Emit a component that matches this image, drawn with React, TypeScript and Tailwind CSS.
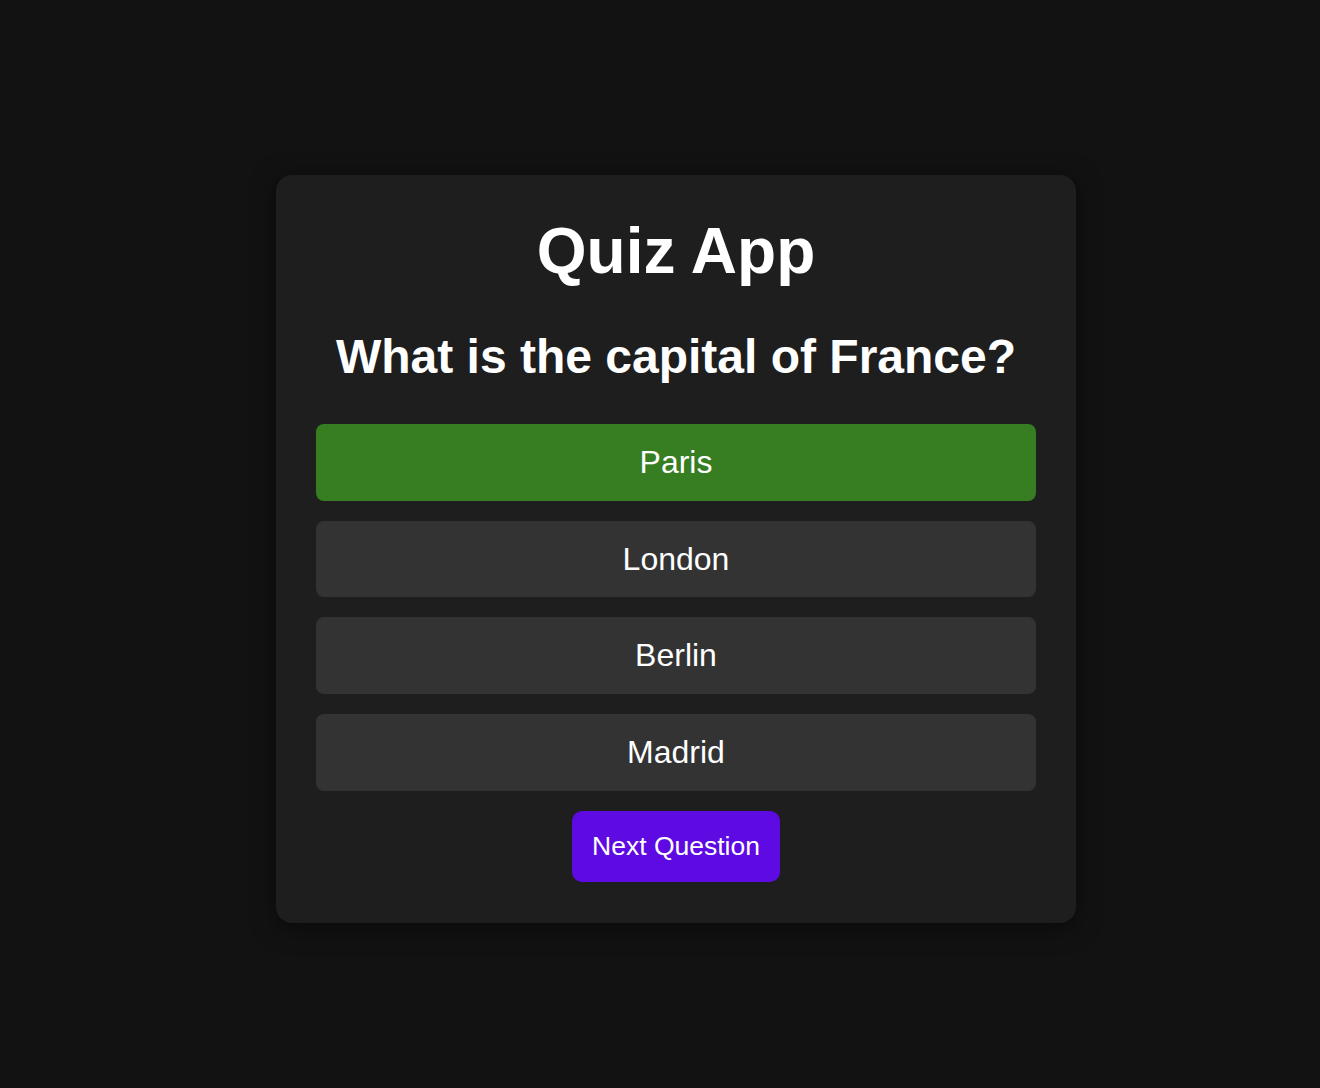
import { useState } from "react";

// ── Data ──────────────────────────────────────────────────────────────────────

const question = {
  text: "What is the capital of France?",
  options: ["Paris", "London", "Berlin", "Madrid"],
  answer: "Paris",
};

// ── Component ─────────────────────────────────────────────────────────────────

export default function App() {
  const [selected, setSelected] = useState<string | null>("Paris");

  return (
    <div className="min-h-screen bg-[#121212] flex items-center justify-center pl-8 pt-[10px] font-['Liberation_Sans',Arial,sans-serif] text-white">
      <div className="w-[800px] bg-[#1e1e1e] rounded-2xl px-10 pt-10 pb-[41px] flex flex-col items-center shadow-[0_4px_24px_rgba(0,0,0,0.5)]">
        <h1 className="text-[64px] leading-[1.15] font-bold text-center">Quiz App</h1>

        <h2 className="mt-10 text-[48px] leading-[1.15] font-bold text-center">
          {question.text}
        </h2>

        {/* ── Options ── */}
        <div className="mt-10 w-full flex flex-col gap-5">
          {question.options.map((opt) => (
            <button
              key={opt}
              onClick={() => setSelected(opt)}
              className={
                selected === opt
                  ? "w-full py-5 rounded-lg text-[32px] leading-[1.15] text-white bg-[#377d22]"
                  : "w-full py-5 rounded-lg text-[32px] leading-[1.15] text-white bg-[#333333]"
              }
            >
              {opt}
            </button>
          ))}
        </div>

        <button
          onClick={() => setSelected(null)}
          className="mt-5 h-[71px] px-5 rounded-[10px] bg-[#5d0ae3] text-white text-[26.5px] leading-[1.15]"
        >
          Next Question
        </button>
      </div>
    </div>
  );
}
